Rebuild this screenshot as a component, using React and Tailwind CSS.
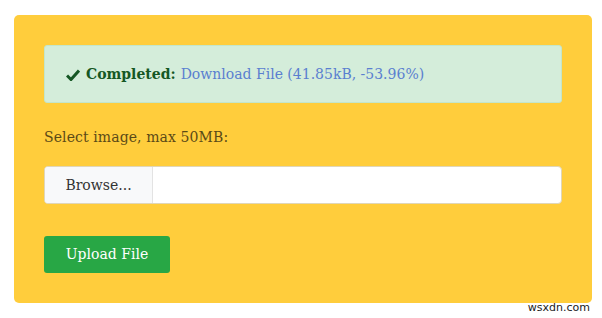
export default function App() {
    return (
        <div className="relative w-[602px] h-[318px] bg-white" style={{ fontFamily: '"DejaVu Serif", "Liberation Serif", serif' }}>
            <div className="absolute left-[14px] top-[15px] w-[578px] h-[288px] bg-[#ffcd3c] rounded-[5px] px-[30px] pt-[30px]">
                <div className="h-[58px] bg-[#d4edda] border border-[#c3e6cb] rounded-[3px] flex items-center pl-[21px] text-[14px]">
                    <svg width="14" height="12" viewBox="0 0 14 12" className="mr-[6px] mt-[1px]">
                        <path d="M1 6.5 L5 10.5 L13 1.5" fill="none" stroke="#155724" strokeWidth="3" />
                    </svg>
                    <span className="font-bold text-[#155724]">Completed:</span>
                    <span className="ml-[5px] text-[#5a7fd0]">Download File (41.85kB, -53.96%)</span>
                </div>
                <div className="mt-[24px] text-[14px] text-[#5b4a17] tracking-[0.1px]">Select image, max 50MB:</div>
                <div className="mt-[18px] h-[38px] flex bg-white border border-[#e0d6b8] rounded-[4px] overflow-hidden">
                    <div className="w-[108px] bg-[#f8f9fa] border-r border-[#e3e3e3] flex items-center justify-center text-[14px] text-[#333]">Browse...</div>
                    <div className="flex-1" />
                </div>
                <button className="mt-[32px] w-[126px] h-[37px] bg-[#28a745] rounded-[3px] text-white text-[14px]">Upload File</button>
            </div>
            <div className="absolute right-[12px] bottom-[2px] text-[11px] text-[#222]" style={{ fontFamily: '"DejaVu Sans", sans-serif' }}>wsxdn.com</div>
        </div>
    );
}
